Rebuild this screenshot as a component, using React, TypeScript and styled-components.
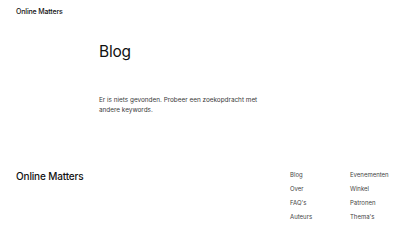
import React from "react";
import styled, { createGlobalStyle } from "styled-components";

const Global = createGlobalStyle`
  html, body { margin: 0; padding: 0; background: #ffffff; }
  body { font-family: Inter, "Noto Sans", sans-serif; color: #111111; -webkit-font-smoothing: antialiased; }
  * { box-sizing: border-box; }
`;

const Page = styled.div`
  width: 400px;
  height: 250px;
  display: flex;
  flex-direction: column;
  overflow: hidden;
`;

const Header = styled.header`
  height: 24px;
  padding: 8px 16px 0;
`;

const Brand = styled.div<{ $size: number }>`
  font-size: ${(p) => p.$size}px;
  font-weight: 500;
  letter-spacing: -0.15px;
  line-height: 1;
  color: #111;
`;

const Main = styled.main`
  padding: 19px 0 0 99px;
  height: 142px;
`;

const Title = styled.h1`
  margin: 0;
  font-size: 15.5px;
  font-weight: 400;
  line-height: 18px;
  letter-spacing: -0.2px;
  color: #111;
`;

const Message = styled.p`
  margin: 34px 0 0;
  width: 170px;
  font-size: 6.4px;
  line-height: 10px;
  font-weight: 400;
  color: #3a3a3a;
`;

const Footer = styled.footer`
  display: flex;
  justify-content: space-between;
  align-items: flex-start;
  padding: 0 16px;
`;

const FooterBrand = styled.div`
  padding-top: 5px;
`;

const LinkGrid = styled.nav`
  display: grid;
  grid-template-columns: 60px 34px;
  grid-auto-rows: 14px;
  padding-top: 2px;
`;

const FooterLink = styled.a`
  font-size: 6px;
  line-height: 14px;
  color: #444;
  text-decoration: none;
`;

const col1 = ["Blog", "Over", "FAQ's", "Auteurs"];
const col2 = ["Evenementen", "Winkel", "Patronen", "Thema's"];

export default function App() {
  const items: string[] = [];
  for (let i = 0; i < 4; i++) {
    items.push(col1[i], col2[i]);
  }
  return (
    <>
      <Global />
      <Page>
        <Header>
          <Brand $size={7}>Online Matters</Brand>
        </Header>
        <Main>
          <Title>Blog</Title>
          <Message>
            Er is niets gevonden. Probeer een zoekopdracht met andere keywords.
          </Message>
        </Main>
        <Footer>
          <FooterBrand>
            <Brand $size={10}>Online Matters</Brand>
          </FooterBrand>
          <LinkGrid>
            {items.map((t) => (
              <FooterLink key={t} href="#">
                {t}
              </FooterLink>
            ))}
          </LinkGrid>
        </Footer>
      </Page>
    </>
  );
}
